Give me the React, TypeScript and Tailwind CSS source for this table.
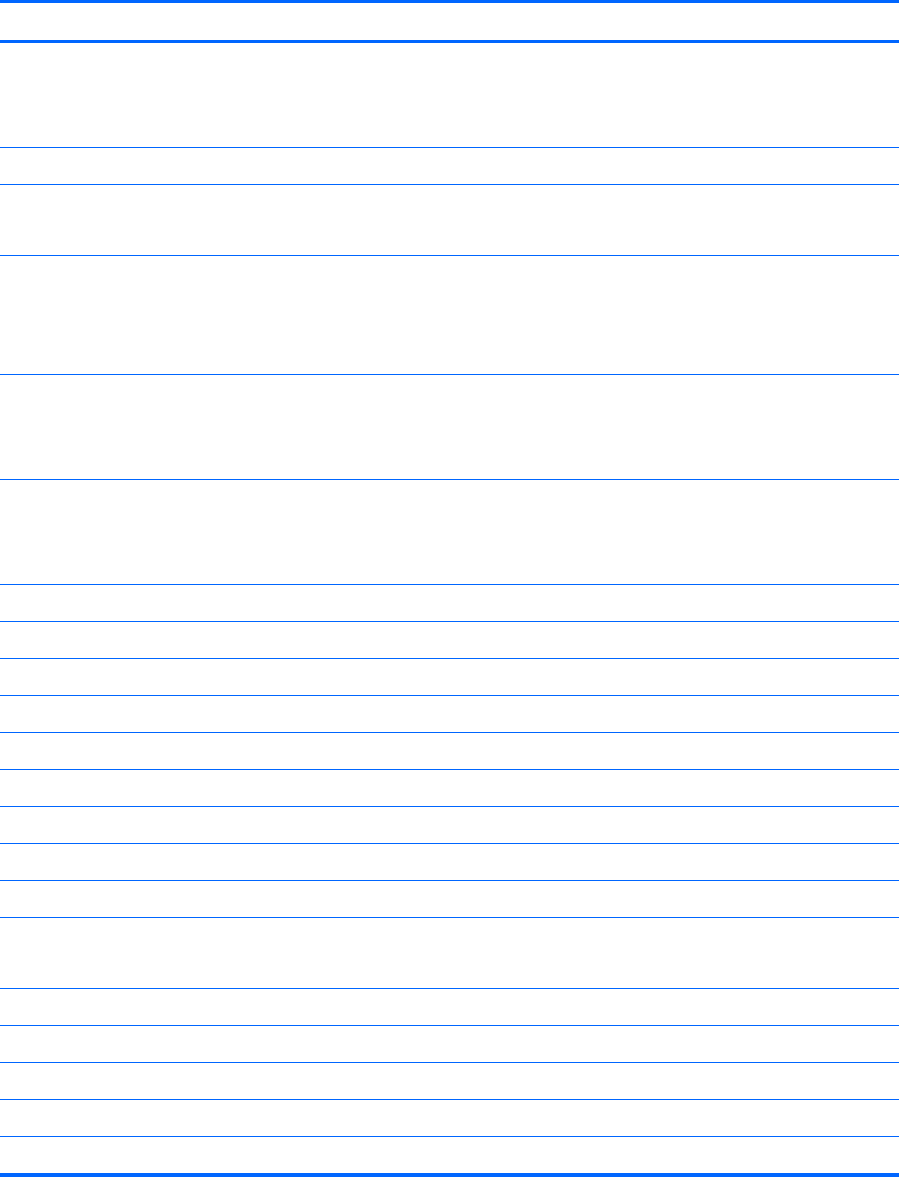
import React from 'react';

// row heights in px, between the blue rules
const rows: string[] = [
  'h-[104px]',
  'h-[36px]',
  'h-[70px]',
  'h-[118px]',
  'h-[104px]',
  'h-[104px]',
  'h-[36px]',
  'h-[36px]',
  'h-[36px]',
  'h-[36px]',
  'h-[36px]',
  'h-[36px]',
  'h-[36px]',
  'h-[36px]',
  'h-[36px]',
  'h-[70px]',
  'h-[36px]',
  'h-[36px]',
  'h-[36px]',
  'h-[36px]',
  'h-[36px]',
];

export default function App() {
  return (
    <div className="w-[900px] h-[1177px] bg-white" style={{ fontFamily: '"Liberation Sans", Arial, sans-serif' }}>
      <div className="w-[899px] flex flex-col">
        <div className="h-[43px] border-t-[3px] border-b-[3px] border-[#0066ff]" />
        {rows.map((h, i) => (
          <div
            key={i}
            className={
              i === rows.length - 1
                ? `${h} border-b-[4px] border-[#0066ff] box-content`
                : `${h} border-b border-[#0066ff] box-content`
            }
          />
        ))}
      </div>
    </div>
  );
}
